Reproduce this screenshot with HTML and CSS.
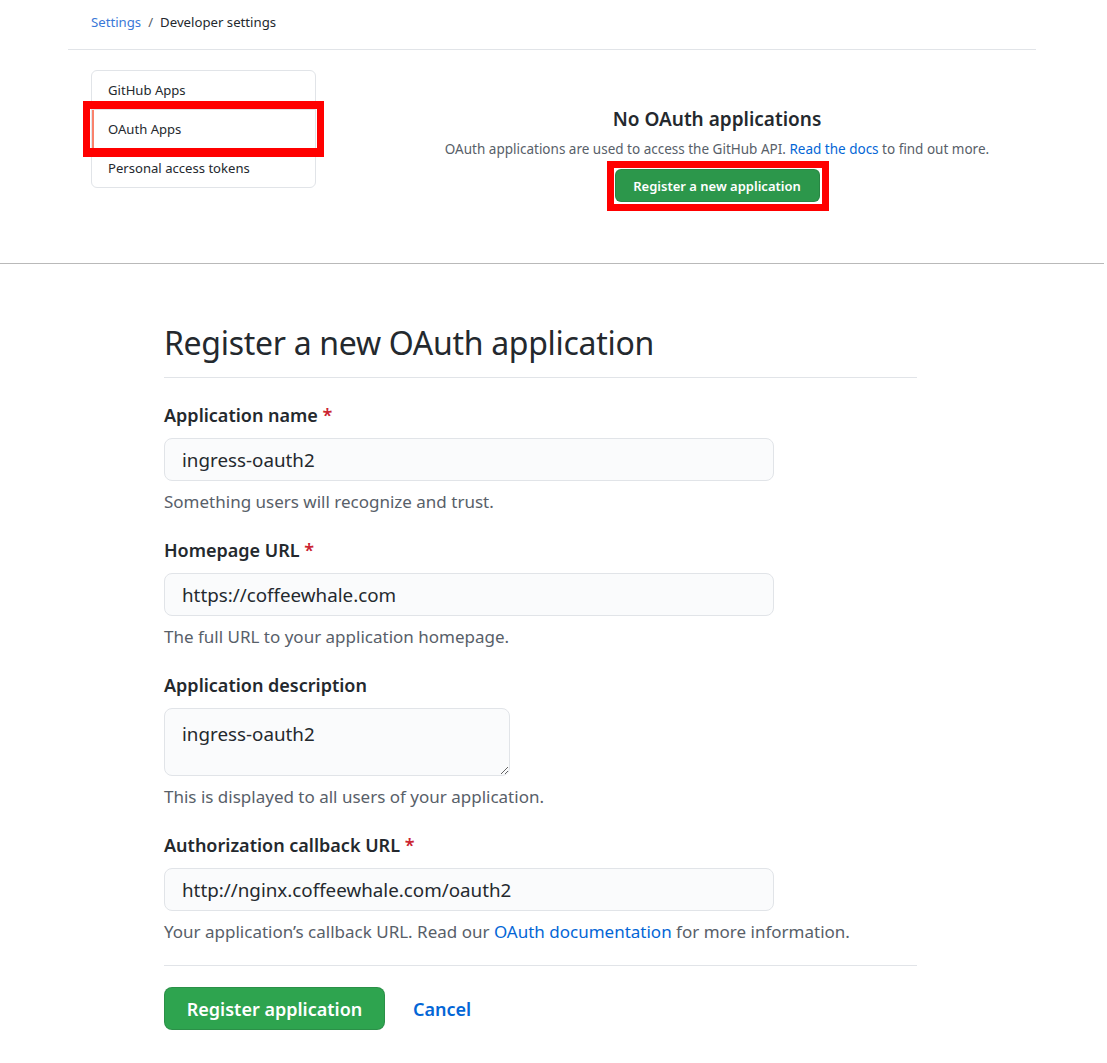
FILE: index.html
```html
<!DOCTYPE html>
<html lang="en">
<head>
<meta charset="utf-8">
<title>Developer settings</title>
<link rel="stylesheet" href="styles.css">
</head>
<body>
<div class="top">
  <nav class="crumbs"><a class="crumb-link" href="#">Settings</a><span class="crumb-sep">/</span><span class="crumb-current">Developer settings</span></nav>
  <div class="top-rule"></div>
  <div class="layout">
    <ul class="side-menu">
      <li class="side-item">GitHub Apps</li>
      <li class="side-item selected">OAuth Apps</li>
      <li class="side-item">Personal access tokens</li>
    </ul>
    <div class="main">
      <div class="blankslate">
        <h2 class="blank-title">No OAuth applications</h2>
        <p class="blank-text">OAuth applications are used to access the GitHub API. <a class="link" href="#">Read the docs</a> to find out more.</p>
        <button class="btn-small" type="button">Register a new application</button>
      </div>
    </div>
  </div>
</div>
<div class="divider"></div>
<form class="form">
  <h1 class="form-title">Register a new OAuth application</h1>
  <div class="group">
    <label class="label">Application name <span class="req">*</span></label>
    <input class="field" type="text" value="ingress-oauth2">
    <p class="note">Something users will recognize and trust.</p>
  </div>
  <div class="group">
    <label class="label">Homepage URL <span class="req">*</span></label>
    <input class="field" type="text" value="https://coffeewhale.com">
    <p class="note">The full URL to your application homepage.</p>
  </div>
  <div class="group">
    <label class="label">Application description</label>
    <textarea class="field area">ingress-oauth2</textarea>
    <p class="note">This is displayed to all users of your application.</p>
  </div>
  <div class="group">
    <label class="label">Authorization callback URL <span class="req">*</span></label>
    <input class="field" type="text" value="http://nginx.coffeewhale.com/oauth2">
    <p class="note">Your application’s callback URL. Read our <a class="link" href="#">OAuth documentation</a> for more information.</p>
  </div>
  <div class="actions">
    <button class="btn-primary" type="button">Register application</button>
    <a class="cancel" href="#">Cancel</a>
  </div>
</form>
</body>
</html>
```
FILE: styles.css
```css
* { box-sizing: border-box; }
html, body { margin: 0; padding: 0; background: #fff; }
body {
  font-family: "Noto Sans", "Open Sans", sans-serif;
  color: #24292e;
  width: 1107px;
}
a { text-decoration: none; }

/* ---------- top (settings) ---------- */
.top { padding-top: 12px; }
.crumbs {
  margin-left: 91px;
  font-size: 13.2px;
  line-height: 20px;
  height: 20px;
}
.crumb-link { color: #3a78d8; }
.crumb-sep { color: #586069; margin: 0 7px; }
.crumb-current { color: #24292e; }
.top-rule {
  margin: 17px 0 0 68px;
  width: 968px;
  border-top: 1px solid #e1e4e8;
}
.layout {
  display: flex;
  margin: 20px 0 0 91px;
  align-items: flex-start;
}
.side-menu {
  list-style: none;
  margin: 0;
  padding: 0;
  width: 225px;
  border: 1px solid #e1e4e8;
  border-radius: 6px;
  flex: none;
}
.side-item {
  height: 38px;
  line-height: 38px;
  padding-left: 16px;
  font-size: 13.1px;
  color: #24292e;
}
.side-item + .side-item { border-top: 1px solid #e1e4e8; height: 39px; line-height: 38px; }
.side-item.selected {
  position: relative;
  box-shadow: inset 2px 0 0 #f9826c;
}
.side-item.selected::after {
  content: "";
  position: absolute;
  left: -9px;
  right: -9px;
  top: -9px;
  bottom: -9px;
  border-style: solid;
  border-color: #ff0000;
  border-width: 8px 7px 9px 7px;
  pointer-events: none;
}
.main {
  margin-left: 24px;
  width: 754px;
  padding-top: 37px;
}
.blankslate { text-align: center; }
.blank-title {
  margin: 0;
  font-size: 19px;
  line-height: 24px;
  font-weight: 600;
  color: #24292e;
}
.blank-text {
  margin: 8px 0 0;
  font-size: 13.5px;
  line-height: 20px;
  color: #586069;
}
.link { color: #0366d6; }
.btn-small {
  position: relative;
  margin-top: 10px;
  height: 33px;
  width: 205px;
  padding: 0;
  border: 1px solid rgba(27, 31, 35, 0.15);
  border-radius: 6px;
  background: #2c974b;
  color: #fff;
  font-family: "Noto Sans", "Open Sans", sans-serif;
  font-size: 13px;
  font-weight: 600;
}
.btn-small::after {
  content: "";
  position: absolute;
  left: -9px;
  right: -10px;
  top: -9px;
  bottom: -10px;
  border: 7px solid #ff0000;
  pointer-events: none;
}
.divider {
  margin-top: 61px;
  width: 1104px;
  height: 0;
  border-top: 1px solid #b9b9b9;
}

/* ---------- form ---------- */
.form {
  margin: 59px 0 0 164px;
  width: 753px;
}
.form-title {
  margin: 0;
  font-size: 32px;
  line-height: 40px;
  font-weight: 400;
  letter-spacing: -0.3px;
  padding-bottom: 14px;
  border-bottom: 1px solid #e1e4e8;
  color: #24292e;
}
.group { margin-top: 24px; }
.group + .group { margin-top: 24px; }
.label {
  display: block;
  font-size: 18px;
  line-height: 26px;
  font-weight: 600;
  color: #24292e;
}
.req { color: #cb2431; }
.field {
  display: block;
  margin-top: 10px;
  width: 610px;
  height: 43px;
  padding: 0 17px;
  border: 1px solid #e1e4e8;
  border-radius: 8px;
  background: #fafbfc;
  font-family: "Noto Sans", "Open Sans", sans-serif;
  font-size: 18.8px;
  color: #24292e;
  outline: none;
}
.area {
  width: 346px;
  height: 68px;
  padding-top: 12px;
  line-height: 26px;
  resize: vertical;
}
.note {
  margin: 10px 0 0;
  font-size: 17px;
  line-height: 22px;
  color: #586069;
}
.actions {
  margin-top: 22px;
  padding-top: 21px;
  border-top: 1px solid #e1e4e8;
  display: flex;
  align-items: center;
  gap: 28px;
}
.btn-primary {
  height: 43px;
  width: 221px;
  padding: 0;
  border: 1px solid rgba(27, 31, 35, 0.15);
  border-radius: 8px;
  background: #2ea44f;
  color: #fff;
  font-family: "Noto Sans", "Open Sans", sans-serif;
  font-size: 18px;
  font-weight: 600;
}
.cancel {
  color: #0366d6;
  font-size: 18px;
  font-weight: 600;
}
```
